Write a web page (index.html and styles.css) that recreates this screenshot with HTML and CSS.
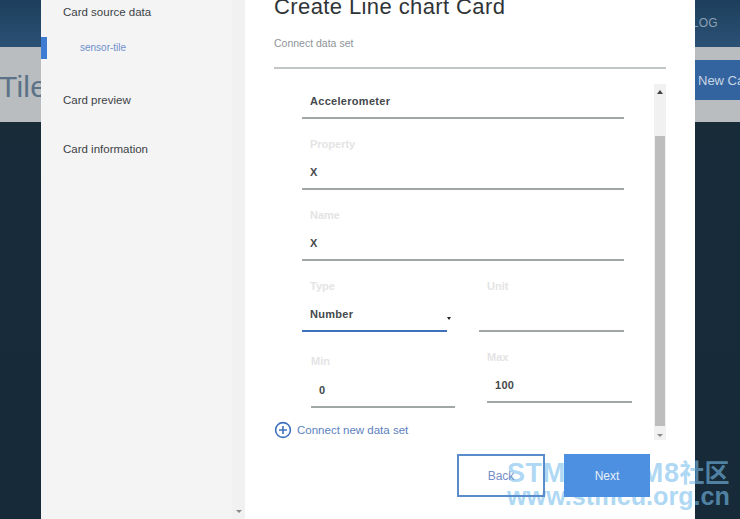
FILE: index.html
```html
<!DOCTYPE html>
<html lang="en">
<head>
<meta charset="utf-8">
<title>Create Line chart Card</title>
<link rel="stylesheet" href="styles.css">
</head>
<body>
<div class="backdrop">
  <div class="topbar"><span class="log">LOG</span></div>
  <div class="band">
    <span class="page-title">Tile</span>
    <span class="new-card">New Card</span>
  </div>
  <div class="dark"></div>
</div>
<div class="modal">
  <aside class="side">
    <nav class="steps">
      <div class="step">Card source data</div>
      <div class="substep">sensor-tile</div>
      <div class="step step-preview">Card preview</div>
      <div class="step step-info">Card information</div>
    </nav>
    <div class="side-scroll"><span class="tri tri-down"></span></div>
  </aside>
  <main class="main">
    <h1 class="title">Create Line chart Card</h1>
    <p class="subtitle">Connect data set</p>
    <div class="rule"></div>
    <div class="panel">
      <div class="form">
        <div class="field field-first"><div class="value">Accelerometer</div></div>
        <div class="field"><label class="label">Property</label><div class="value">X</div></div>
        <div class="field"><label class="label">Name</label><div class="value">X</div></div>
        <div class="pair">
          <div class="field field-select"><label class="label">Type</label><div class="value">Number</div><span class="caret"></span></div>
          <div class="field field-unit"><label class="label">Unit</label><div class="value">&nbsp;</div></div>
        </div>
        <div class="pair pair-range">
          <div class="field field-min"><label class="label">Min</label><div class="value">0</div></div>
          <div class="field field-max"><label class="label">Max</label><div class="value">100</div></div>
        </div>
      </div>
      <div class="panel-scroll">
        <span class="tri tri-up"></span>
        <div class="thumb"></div>
        <span class="tri tri-down"></span>
      </div>
    </div>
    <div class="connect">
      <svg class="plus" width="18" height="18" viewBox="0 0 18 18" aria-hidden="true">
        <circle cx="9" cy="9" r="7.4" fill="none" stroke="#3f72bd" stroke-width="1.6"/>
        <path d="M9 5v8M5 9h8" fill="none" stroke="#3f72bd" stroke-width="1.6"/>
      </svg>
      <span>Connect new data set</span>
    </div>
    <div class="actions">
      <button class="btn btn-back" type="button">Back</button>
      <button class="btn btn-next" type="button">Next</button>
    </div>
  </main>
</div>
<div class="watermark">
  <div class="wm-top">STM32/STM8<span class="wm-cjk">社区</span></div>
  <div class="wm-bottom">www.stmcu.org.cn</div>
</div>
</body>
</html>
```

FILE: styles.css
```css
* { box-sizing: border-box; }
html, body { margin: 0; padding: 0; width: 740px; height: 519px; overflow: hidden; }
body { font-family: "Liberation Sans", Arial, sans-serif; position: relative; background: #172a38; }

.backdrop { display: flex; flex-direction: column; height: 519px; }
.topbar { height: 47px; background: linear-gradient(#1d3f5c, #2b5175); display: flex; justify-content: flex-end; align-items: center; padding: 0 22px 1px 0; }
.log { color: #8b9fb2; font-size: 12px; letter-spacing: .3px; }
.band { height: 75px; background: #b9bdc0; display: flex; justify-content: space-between; position: relative; }
.page-title { font-size: 30px; color: #5b7287; margin: 23px 0 0 -1px; letter-spacing: .2px; }
.new-card { width: 45px; height: 40px; margin-top: 13px; background: #34649f; color: #c9d6e6; font-size: 13px; line-height: 41px; padding-left: 3px; white-space: nowrap; overflow: hidden; }
.dark { flex: 1; background: linear-gradient(#182b39, #162a39); }

.modal { position: absolute; left: 41px; top: 0; width: 654px; height: 519px; display: flex; background: #fff; overflow: hidden; }

.side { width: 204px; display: flex; flex: none; background: #f4f4f4; position: relative; }
.side::before { content: ""; position: absolute; left: 0; top: 37px; width: 6px; height: 22px; background: #3e7bd2; }
.steps { width: 191px; padding: 5px 0 0 22px; }
.step { font-size: 11.5px; line-height: 14px; color: #3c4247; }
.substep { font-size: 10px; line-height: 12px; color: #6e8fcd; margin: 23px 0 0 17px; }
.step-preview { margin-top: 39px; }
.step-info { margin-top: 35px; }
.side-scroll { width: 13px; background: #f1f1f1; display: flex; justify-content: center; align-items: flex-end; padding-bottom: 6px; }

.tri { display: block; width: 0; height: 0; border-left: 3px solid transparent; border-right: 3px solid transparent; }
.tri-down { border-top: 3px solid #8a8a8a; }
.tri-up { border-bottom: 4px solid #444; }

.main { flex: 1; padding-left: 29px; padding-right: 29px; position: relative; }
.title { margin: -6px 0 0; font-size: 22px; line-height: 25px; font-weight: 400; color: #2f3437; letter-spacing: .4px; white-space: nowrap; }
.subtitle { margin: 18px 0 0; font-size: 10.5px; line-height: 12px; color: #8e9498; }
.rule { height: 2px; margin-top: 18px; background: #c2c6c6; }

.panel { display: flex; height: 356px; margin-top: 15px; }
.form { flex: 1; padding-left: 28px; padding-right: 30px; }
.field { position: relative; }
.field-first { height: 35px; }
.label { display: block; font-size: 11px; line-height: 13px; color: #e4e4e4; font-weight: 700; padding-left: 8px; }
.value { font-size: 11px; line-height: 13px; font-weight: 700; color: #45494c; letter-spacing: .3px; padding: 15px 8px 10px; height: 39px; border-bottom: 2px solid #a0a7a6; }
.form > .field:not(.field-first) { margin-top: 19px; }
.field-first .value { padding-top: 11px; padding-bottom: 9px; height: 35px; }

.pair { display: flex; justify-content: space-between; margin-top: 19px; }
.field-select, .field-unit { width: 145px; }
.field-select .value { border-bottom-color: #3f72bd; }
.caret { position: absolute; right: -4px; top: 37px; border-left: 2.5px solid transparent; border-right: 2.5px solid transparent; border-top: 3px solid #222; }
.pair-range { margin-top: 23px; margin-right: -8px; }
.field-min { width: 144px; margin-left: 9px; }
.field-min .label { padding-left: 0; }
.field-min .value { height: 40px; padding-top: 16px; }
.field-max { width: 145px; margin-top: -4px; }
.field-max .label { padding-left: 0; }

.panel-scroll { width: 12px; flex: none; background: #f1f1f1; display: flex; flex-direction: column; align-items: center; }
.panel-scroll .tri-up { margin-top: 6px; }
.thumb { width: 10px; flex: 1; margin: 42px 0 8px; background: #bdbdbd; }
.panel-scroll .tri-down { margin-bottom: 3px; }

.connect { position: absolute; left: 29px; top: 421px; display: flex; align-items: center; gap: 5px; font-size: 11.5px; color: #5d7fc0; }
.plus { display: block; }

.actions { position: absolute; left: 212px; top: 454px; display: flex; gap: 19px; }
.btn { width: 88px; height: 43px; font-family: inherit; font-size: 12px; padding: 0; }
.btn-back { background: transparent; border: 2px solid #5a8ccb; color: #7590c8; position: relative; z-index: 2; }
.btn-next { width: 86px; background: #4d8fe0; border: 0; color: #e8f0fb; position: relative; z-index: 2; }

.watermark { position: absolute; left: 507px; top: 461px; color: rgba(120, 190, 235, .6); font-weight: 700; white-space: nowrap; z-index: 1; font-family: "Liberation Sans", "Noto Sans CJK SC", sans-serif; }
.wm-top { font-size: 27px; line-height: 25px; letter-spacing: .6px; }
.wm-cjk { font-size: 25px; letter-spacing: 0; }
.wm-bottom { font-size: 25.2px; line-height: 20px; }
```
